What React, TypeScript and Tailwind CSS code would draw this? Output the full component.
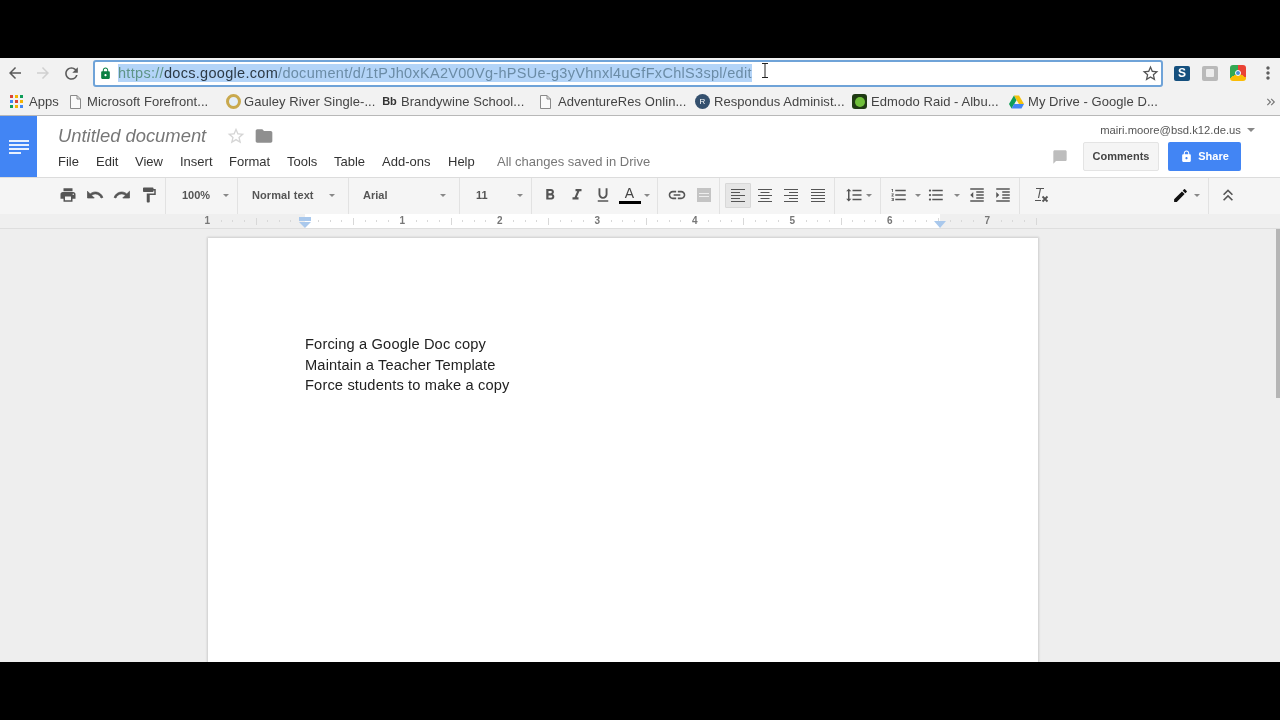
import {
  MdArrowBack, MdArrowForward, MdRefresh, MdLock, MdStarBorder, MdMoreVert, MdFolder,
  MdPrint, MdFormatPaint, MdFormatBold, MdFormatItalic, MdFormatUnderlined, MdLink,
  MdFormatLineSpacing, MdFormatListNumbered, MdFormatListBulleted, MdFormatIndentDecrease, MdFormatIndentIncrease,
  MdEdit, MdKeyboardDoubleArrowUp, MdKeyboardDoubleArrowRight, MdChatBubble,
} from 'react-icons/md';
import type { ReactNode } from 'react';

const sans = "font-['Liberation_Sans',Arial,sans-serif]";

function Caret({ className = '' }: { className?: string }) {
  return <span className={`w-0 h-0 border-x-[3px] border-x-transparent border-t-[3px] border-t-[#888] ${className}`} />;
}

function DocIcon() {
  return (
    <svg width="11" height="14" viewBox="0 0 11 14" fill="#fafafa" stroke="#8a8a8a">
      <path d="M.5.5h6.5l3.500 3.500v9.500h-10zM7 .5v3.500h3.500" />
    </svg>
  );
}

function AppsIcon() {
  const colors = ['#db4437', '#f4b400', '#0f9d58', '#4285f4', '#db4437', '#f4b400', '#0f9d58', '#f4b400', '#4285f4'];
  return (
    <div className="grid grid-cols-3 gap-[2px] w-[13px]">
      {colors.map((c, i) => (
        <svg key={i} width="3" height="3"><rect width="3" height="3" fill={c} /></svg>
      ))}
    </div>
  );
}

function DriveIcon() {
  return (
    <svg width="16" height="14" viewBox="0 0 16 14">
      <path d="M5.3 0h5.4l5.3 9h-5.4z" fill="#f4c20d" />
      <path d="M5.3 0 0 9l2.7 5L8 5z" fill="#0f9d58" />
      <path d="M2.7 14h10.6L16 9H5.4z" fill="#4285f4" />
    </svg>
  );
}

const bookmarks: { icon: ReactNode; text: string; box: string }[] = [
  { icon: <AppsIcon />, text: 'Apps', box: 'w-[68px] pl-[9px] gap-[5px]' },
  { icon: <DocIcon />, text: 'Microsoft Forefront...', box: 'w-[158px] gap-[4px]' },
  {
    icon: <span className="w-[15px] h-[15px] rounded-full border-[3px] border-[#c9a94e] bg-[#e4eef8]" />,
    text: 'Gauley River Single-...',
    box: 'w-[155px] gap-[3px]',
  },
  { icon: <span className="text-[11px] font-bold text-[#333]">Bb</span>, text: 'Brandywine School...', box: 'w-[157px] pl-[1px] gap-[4px]' },
  { icon: <DocIcon />, text: 'AdventureRes Onlin...', box: 'w-[157px] gap-[5px]' },
  {
    icon: <span className="w-[15px] h-[15px] rounded-full bg-[#34506e] text-white text-[8px] flex items-center justify-center">R</span>,
    text: 'Respondus Administ...',
    box: 'w-[157px] gap-[4px]',
  },
  { icon: <span className="w-[15px] h-[15px] rounded-[3px] bg-[#1f3a14] flex items-center justify-center"><span className="w-[10px] h-[10px] rounded-full bg-[#6fbf3a]" /></span>, text: 'Edmodo Raid - Albu...', box: 'w-[157px] gap-[4px]' },
  { icon: <DriveIcon />, text: 'My Drive - Google D...', box: 'w-[140px] gap-[4px]' },
];

function Bookmarks() {
  return (
    <div className="h-[28px] bg-[#f2f2f2] border-b border-[#b8b8b8] flex items-center">
      {bookmarks.map((b) => (
        <div key={b.text} className={`flex items-center shrink-0 ${b.box}`}>
          <span className="w-[15px] shrink-0 flex justify-center">{b.icon}</span>
          <span className="text-[13px] tracking-[0.06px] text-[#444] whitespace-nowrap">{b.text}</span>
        </div>
      ))}
      <MdKeyboardDoubleArrowRight className="ml-auto mr-[2px] w-[14px] h-[14px] text-[#777]" />
    </div>
  );
}

function BrowserBar() {
  return (
    <div className="h-[30px] bg-[#f2f2f2] flex items-center">
      <div className="w-[93px] flex items-center shrink-0">
        <MdArrowBack className="ml-[6px] w-[18px] h-[18px] text-[#5a5a5a]" />
        <MdArrowForward className="ml-[10px] w-[18px] h-[18px] text-[#d0d0d0]" />
        <MdRefresh className="ml-[10px] w-[19px] h-[19px] text-[#5a5a5a]" />
      </div>
      <div className="w-[1070px] h-[27px] bg-white border-2 border-[#6fa3d8] rounded-[3px] flex items-center shrink-0">
        <MdLock className="ml-[4px] w-[13px] h-[13px] text-[#0b8043]" />
        <span className="ml-[6px] h-[18px] leading-[18px] bg-[#b3d4f8] text-[14.5px] tracking-[0.3px] text-[#6b8ca6] whitespace-nowrap">
          <span className="text-[#5f9488]">https://</span>
          <span className="text-[#2c3a46]">docs.google.com</span>
          /document/d/1tPJh0xKA2V00Vg-hPSUe-g3yVhnxl4uGfFxChlS3spl/edit
        </span>
        <MdStarBorder className="ml-auto mr-[1px] w-[19px] h-[19px] text-[#555]" />
      </div>
      <div className="flex items-center pl-[11px] gap-[12px]">
        <span className="w-[16px] h-[15px] rounded-[2px] bg-[#15507e] text-white text-[12px] font-bold leading-[15px] text-center">S</span>
        <span className="w-[16px] h-[15px] rounded-[2px] bg-[#b9b9b9] flex items-center justify-center">
          <span className="w-[8px] h-[8px] bg-[#ececec] rounded-[1px]" />
        </span>
        <span className="w-[16px] h-[16px] rounded-[3px] bg-[conic-gradient(#ea4335_0_33%,#fbbc05_33%_66%,#34a853_66%_100%)] flex items-center justify-center">
          <span className="w-[6px] h-[6px] rounded-full bg-[#4a90d9] border border-white" />
        </span>
        <MdMoreVert className="w-[20px] h-[20px] text-[#5f5f5f]" />
      </div>
    </div>
  );
}

function DocHeader() {
  const menus = [
    ['File', 'w-[38px]'], ['Edit', 'w-[39px]'], ['View', 'w-[45px]'], ['Insert', 'w-[49px]'], ['Format', 'w-[58px]'],
    ['Tools', 'w-[47px]'], ['Table', 'w-[48px]'], ['Add-ons', 'w-[66px]'], ['Help', 'w-[49px]'],
  ];
  return (
    <div className="h-[61px] bg-white flex">
      <div className="w-[37px] bg-[#4285f4] flex items-center justify-center shrink-0">
        <svg width="20" height="14" viewBox="0 0 20 14" fill="#e8f0fe">
          <rect width="20" height="2" /><rect y="4" width="20" height="2" /><rect y="8" width="20" height="2" /><rect y="12" width="12" height="2" />
        </svg>
      </div>
      <div className="pl-[21px] pt-[8px] shrink-0">
        <div className="h-[23px] flex items-center">
          <span className="w-[168px] text-[18.4px] italic text-[#777] leading-[23px] whitespace-nowrap">Untitled document</span>
          <MdStarBorder className="w-[20px] h-[20px] text-[#d5d5d5]" />
          <MdFolder className="ml-[8px] w-[20px] h-[20px] text-[#8f8f8f]" />
        </div>
        <div className="mt-[5px] flex items-center text-[13px] text-[#333] leading-[20px]">
          {menus.map(([m, w]) => <span key={m} className={w}>{m}</span>)}
          <span className="text-[#777]">All changes saved in Drive</span>
        </div>
      </div>
      <div className="ml-auto pr-[39px] pt-[7px] flex flex-col items-end">
        <div className="h-[14px] flex items-center text-[11.25px] text-[#555] mr-[-19px]">
          mairi.moore@bsd.k12.de.us
          <Caret className="ml-[6px] mr-[5px] border-x-[4px] border-t-[4px]" />
        </div>
        <div className="mt-[5px] flex items-center">
          <div className="w-[26px] h-[29px] flex items-center justify-center">
            <MdChatBubble className="w-[16px] h-[16px] text-[#bdbdbd]" />
          </div>
          <div className="ml-[10px] w-[76px] h-[29px] bg-[#f5f5f5] border border-[#e4e4e4] rounded-[2px] text-[11px] font-bold text-[#444] flex items-center justify-center">Comments</div>
          <div className="ml-[9px] w-[73px] h-[29px] bg-[#4285f4] rounded-[2px] text-[11px] font-bold text-white flex items-center justify-center gap-[5px]">
            <MdLock className="w-[13px] h-[13px]" />Share
          </div>
        </div>
      </div>
    </div>
  );
}

function Lines({ kind }: { kind: 'left' | 'center' | 'right' | 'justify' }) {
  const rows = [0, 1, 2, 3, 4];
  const x = (i: number) => {
    const w = kind === 'justify' || i % 2 === 0 ? 14 : 9;
    if (kind === 'center') return [(14 - w) / 2, w];
    if (kind === 'right') return [14 - w, w];
    return [0, w];
  };
  return (
    <svg width="14" height="13" viewBox="0 0 14 13" fill="#555">
      {rows.map((i) => <rect key={i} x={x(i)[0]} y={i * 3} width={x(i)[1]} height="1" />)}
    </svg>
  );
}

// italic T with a small cross, the "clear formatting" button
function ClearFormat() {
  return (
    <svg width="18" height="18" viewBox="0 0 18 18" fill="none" stroke="#555">
      <path d="M4 2.500h8M8.500 2.500 6.500 12M3 14.500h6" strokeWidth="1.2" />
      <path d="M10.500 10.500l5 5M15.500 10.500l-5 5" strokeWidth="1.8" />
    </svg>
  );
}

// heavy curved arrow, mirrored for redo
function UndoIcon({ className = '' }: { className?: string }) {
  return (
    <svg className={className} width="18" height="18" viewBox="0 0 24 24" fill="#555" stroke="#555" strokeWidth="1">
      <path d="M12.500 8c-2.650 0-5.050 1-6.900 2.600L2 7v9h9l-3.620-3.620c1.390-1.160 3.160-1.880 5.120-1.880 3.540 0 6.550 2.310 7.600 5.500l2.370-.78C21.080 11.030 17.150 8 12.500 8z" />
    </svg>
  );
}

function Btn({ w = 'w-[27px]', children }: { w?: string; children: ReactNode }) {
  return <div className={`${w} h-[25px] flex items-center justify-center shrink-0`}>{children}</div>;
}

function Group({ box, children }: { box: string; children: ReactNode }) {
  return <div className={`h-full pb-[2px] border-r border-[#e2e2e2] flex items-center shrink-0 ${box}`}>{children}</div>;
}

function Toolbar() {
  const ic = 'w-[18px] h-[18px] text-[#555]';
  const label = 'text-[11px] font-bold text-[#555] whitespace-nowrap';
  return (
    <div className="h-[37px] bg-[#f5f5f5] border-t border-[#dcdcdc] flex">
      <Group box="w-[166px] pl-[55px]">
        <Btn w="w-[26px]"><MdPrint className={ic} /></Btn>
        <Btn><UndoIcon /></Btn>
        <Btn><UndoIcon className="-scale-x-100" /></Btn>
        <Btn><MdFormatPaint className={ic} /></Btn>
      </Group>
      <Group box="w-[72px] pl-[16px]">
        <span className={`${label} w-[41px]`}>100%</span><Caret />
      </Group>
      <Group box="w-[111px] pl-[14px]">
        <span className={`${label} w-[77px] tracking-[0.1px]`}>Normal text</span><Caret />
      </Group>
      <Group box="w-[111px] pl-[14px]">
        <span className={`${label} w-[78px]`}>Arial</span><Caret className="ml-[-1px]" />
      </Group>
      <Group box="w-[72px] pl-[16px]">
        <span className={`${label} w-[41px]`}>11</span><Caret />
      </Group>
      <Group box="w-[126px] pl-[5px]">
        <Btn w="w-[26px]"><MdFormatBold className={ic} /></Btn>
        <Btn><MdFormatItalic className={ic} /></Btn>
        <Btn w="w-[26px]"><MdFormatUnderlined className={ic} /></Btn>
        <div className="w-[27px] h-[25px] flex flex-col items-center justify-center shrink-0">
          <span className="text-[14px] leading-[15px] text-[#444]">A</span>
          <span className="w-[22px] h-[3px] bg-black" />
        </div>
        <Caret className="ml-[1px]" />
      </Group>
      <Group box="w-[62px] pl-[5px]">
        <Btn w="w-[27px]"><MdLink className="w-[20px] h-[20px] text-[#555]" /></Btn>
        <Btn w="w-[28px]">
          <span className="w-[14px] h-[14px] bg-[#c4c4c4] flex flex-col justify-center gap-[2px] px-[2px]">
            <span className="h-[1px] bg-[#eee]" /><span className="h-[1px] bg-[#eee]" />
          </span>
        </Btn>
      </Group>
      <Group box="w-[115px] pl-[5px]">
        <div className="w-[26px] h-[25px] bg-[#e6e6e6] border border-[#d8d8d8] rounded-[1px] flex items-center justify-center shrink-0"><Lines kind="left" /></div>
        <Btn w="w-[27px]"><Lines kind="center" /></Btn>
        <Btn w="w-[26px]"><Lines kind="right" /></Btn>
        <Btn w="w-[27px]"><Lines kind="justify" /></Btn>
      </Group>
      <Group box="w-[46px] pl-[5px]">
        <Btn><MdFormatLineSpacing className={ic} /></Btn>
        <Caret className="ml-[-1px]" />
      </Group>
      <Group box="w-[139px] pl-[5px]">
        <Btn w="w-[26px]"><MdFormatListNumbered className={ic} /></Btn>
        <Caret className="ml-[3px]" />
        <Btn w="w-[26px]"><MdFormatListBulleted className={`${ic} ml-[4px]`} /></Btn>
        <Caret className="ml-[7px]" />
        <Btn w="w-[27px]"><MdFormatIndentDecrease className={`${ic} ml-[6px]`} /></Btn>
        <Btn w="w-[26px]"><MdFormatIndentIncrease className={`${ic} ml-[6px]`} /></Btn>
      </Group>
      <Group box="w-[189px] pl-[7px]">
        <Btn><ClearFormat /></Btn>
        <Btn w="w-[18px] ml-[117px]"><MdEdit className="w-[17px] h-[17px] text-[#111]" /></Btn>
        <Caret className="ml-[5px]" />
      </Group>
      <Group box="w-[38px] border-r-0">
        <Btn w="w-[38px]"><MdKeyboardDoubleArrowUp className="w-[20px] h-[20px] text-[#555]" /></Btn>
      </Group>
    </div>
  );
}

function RulerCell({ n, w = 'w-[97.5px]' }: { n?: number; w?: string }) {
  const ticks = [1, 2, 3, 4, 5, 6, 7];
  return (
    <div className={`${w} h-full flex items-center justify-around shrink-0`}>
      <span className="text-[10px] font-bold text-[#777] w-[6px] text-center leading-none">{n}</span>
      {ticks.map((t) => (
        <span key={t} className={t === 4 ? 'w-[1px] h-[7px] bg-[#d8d8d8]' : 'w-[1px] h-[2px] bg-[#d8d8d8]'} />
      ))}
    </div>
  );
}

function Ruler() {
  const inches = [1, 2, 3, 4, 5, 6];
  return (
    <div className="relative h-[15px] bg-[#efefef] border-b border-[#dedede] flex">
      <div className="w-[199px] shrink-0" />
      <div className="absolute left-[305px] top-0 w-[635px] h-[14px] bg-white" />
      <div className="relative flex">
        <RulerCell n={1} />
        <RulerCell />
        {inches.map((n) => <RulerCell key={n} n={n} />)}
        <div className="w-[58px] h-full overflow-hidden shrink-0"><RulerCell n={7} /></div>
      </div>
      <svg className="absolute left-[298px] top-[3px]" width="14" height="11" viewBox="0 0 14 11">
        <rect x="1" width="12" height="4" fill="#a9c8ec" />
        <path d="M1 5h12l-6 6z" fill="#a9c8ec" />
      </svg>
      <svg className="absolute left-[933px] top-[7px]" width="14" height="7" viewBox="0 0 14 7">
        <path d="M1 0h12l-6 7z" fill="#a9c8ec" />
      </svg>
    </div>
  );
}

function Workspace() {
  return (
    <div className="relative h-[433px] bg-[#eeeeee] overflow-hidden">
      <div className="ml-[208px] mt-[9px] w-[830px] h-[500px] bg-white shadow-[0_0_2px_1px_rgba(0,0,0,0.14)] pt-[96px] pl-[97px] text-[14.67px] tracking-[0.14px] leading-[20.5px] text-[#222]">
        <p>Forcing a Google Doc copy</p>
        <p>Maintain a Teacher Template</p>
        <p>Force students to make a copy</p>
      </div>
      <div className="absolute right-0 top-0 w-[4px] h-[169px] bg-[#b5b5b5]" />
    </div>
  );
}

export default function App() {
  return (
    <div className={`relative w-[1280px] h-[720px] bg-black overflow-hidden ${sans}`}>
      <div className="h-[58px]" />
      <div className="blur-[0.4px]">
        <BrowserBar />
        <Bookmarks />
        <DocHeader />
        <Toolbar />
        <Ruler />
        <Workspace />
      </div>
      {/* text cursor over the address bar */}
      <svg className="absolute left-[761px] top-[63px]" width="8" height="15" viewBox="0 0 8 15" stroke="#222" fill="none">
        <path d="M1 .5h6M4 .5v14M1 14.5h6" />
      </svg>
    </div>
  );
}
